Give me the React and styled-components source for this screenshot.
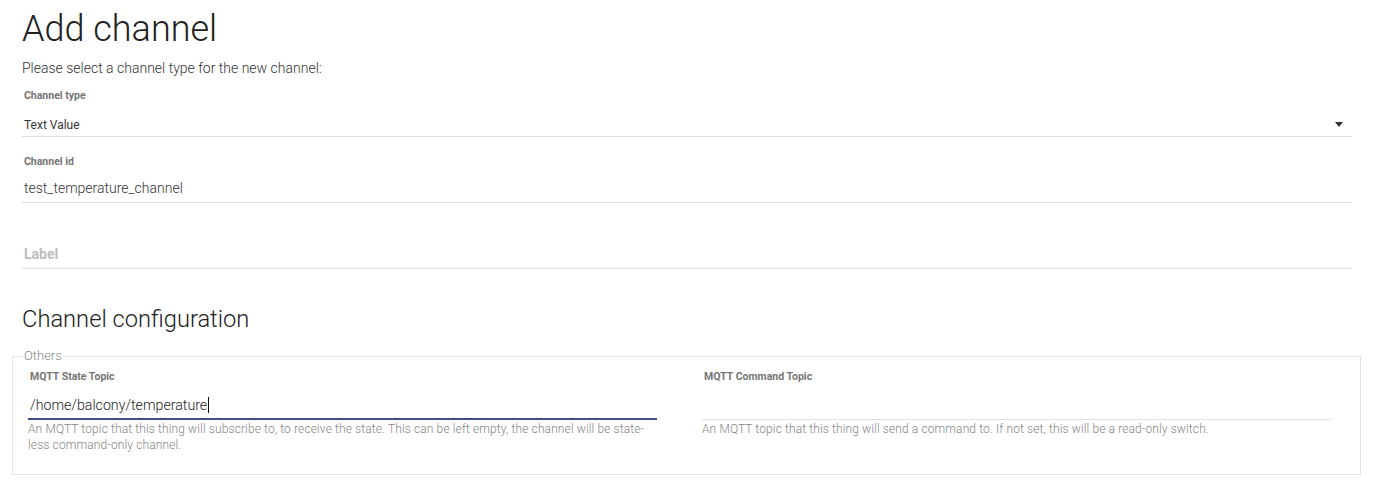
import * as React from 'react';
import styled, { createGlobalStyle } from 'styled-components';

const GlobalStyle = createGlobalStyle`
    html, body {
        margin: 0;
        padding: 0;
        background: #fff;
        font-family: Roboto, "Liberation Sans", sans-serif;
        color: #212121;
    }
`;

const Page = styled.div`
    padding: 0 23px 0 22px;
`;

const Title = styled.h1`
    margin: 0;
    padding-top: 2px;
    font-size: 36px;
    font-weight: 300;
    line-height: 54px;
    color: #222;
`;

const Intro = styled.p`
    margin: 0;
    font-size: 14px;
    font-weight: 300;
    line-height: 24px;
    color: #333;
`;

const Field = styled.div`
    padding-top: ${(p) => p.top}px;
    border-bottom: 1px solid #e0e0e0;
`;

const Label = styled.div`
    height: 16px;
    padding-left: 2px;
    font-size: 10.5px;
    font-weight: 700;
    line-height: 16px;
    color: #757575;
`;

const SelectRow = styled.div`
    display: flex;
    align-items: center;
    justify-content: space-between;
    margin-top: 9px;
    padding-left: 2px;
    height: 23px;
    font-size: 12px;
    font-weight: 400;
    color: #333;
`;

const Arrow = styled.span`
    width: 0;
    height: 0;
    margin-right: 9px;
    border-left: 4px solid transparent;
    border-right: 4px solid transparent;
    border-top: 5px solid #333;
`;

const InputRow = styled.div`
    margin-top: 6px;
    padding: 0 0 2px 2px;
    height: 24px;
    font-size: 14px;
    line-height: 24px;
    color: ${(p) => (p.placeholder ? '#bdbdbd' : '#333')};
    font-weight: ${(p) => (p.placeholder ? 700 : 300)};
`;

const SectionTitle = styled.h2`
    margin: 34px 0 0;
    font-size: 23.7px;
    font-weight: 300;
    line-height: 32px;
    color: #222;
`;

const Group = styled.fieldset`
    margin: 14px -9px 0 -10px;
    padding: 6px 29px 21px 15px;
    border: 1px solid #e3e3e3;
    display: grid;
    grid-template-columns: 1fr 1fr;
    column-gap: 45px;
    min-width: 0;
`;

const Legend = styled.legend`
    margin-left: -5px;
    padding: 0 1px;
    font-size: 13px;
    font-weight: 300;
    line-height: 14px;
    color: #888;
`;

const ConfigItem = styled.div`
    display: flex;
    flex-direction: column;
`;

const TopicInput = styled.div`
    display: flex;
    align-items: center;
    margin-top: 7px;
    padding-left: 2px;
    height: 26px;
    padding-bottom: ${(p) => (p.focused ? 0 : 1)}px;
    border-bottom: ${(p) => (p.focused ? '2px solid #3f4d8a' : '1px solid #e0e0e0')};
    font-size: 14.2px;
    font-weight: 300;
    color: #222;
`;

const Caret = styled.span`
    display: inline-block;
    width: 1px;
    height: 16px;
    margin-left: 1px;
    background: #111;
`;

const Hint = styled.div`
    margin-top: 1px;
    font-size: 12px;
    font-weight: 300;
    letter-spacing: 0.12px;
    line-height: 16px;
    color: #858585;
`;

const configItems = [
    {
        label: 'MQTT State Topic',
        value: '/home/balcony/temperature',
        focused: true,
        hint: 'An MQTT topic that this thing will subscribe to, to receive the state. This can be left empty, the channel will be state-less command-only channel.',
    },
    {
        label: 'MQTT Command Topic',
        value: '',
        focused: false,
        hint: 'An MQTT topic that this thing will send a command to. If not set, this will be a read-only switch.',
    },
];

const App = () => (
    <Page>
        <GlobalStyle />
        <Title>Add channel</Title>
        <Intro>Please select a channel type for the new channel:</Intro>
        <Field top={8}>
            <Label>Channel type</Label>
            <SelectRow>
                <span>Text Value</span>
                <Arrow />
            </SelectRow>
        </Field>
        <Field top={17}>
            <Label>Channel id</Label>
            <InputRow>test_temperature_channel</InputRow>
        </Field>
        <Field top={17}>
            <Label />
            <InputRow placeholder>Label</InputRow>
        </Field>
        <SectionTitle>Channel configuration</SectionTitle>
        <Group>
            <Legend>Others</Legend>
            {configItems.map((item) => (
                <ConfigItem key={item.label}>
                    <Label>{item.label}</Label>
                    <TopicInput focused={item.focused}>
                        {item.value}
                        {item.focused && <Caret />}
                    </TopicInput>
                    <Hint>{item.hint}</Hint>
                </ConfigItem>
            ))}
        </Group>
    </Page>
);

export default App;
